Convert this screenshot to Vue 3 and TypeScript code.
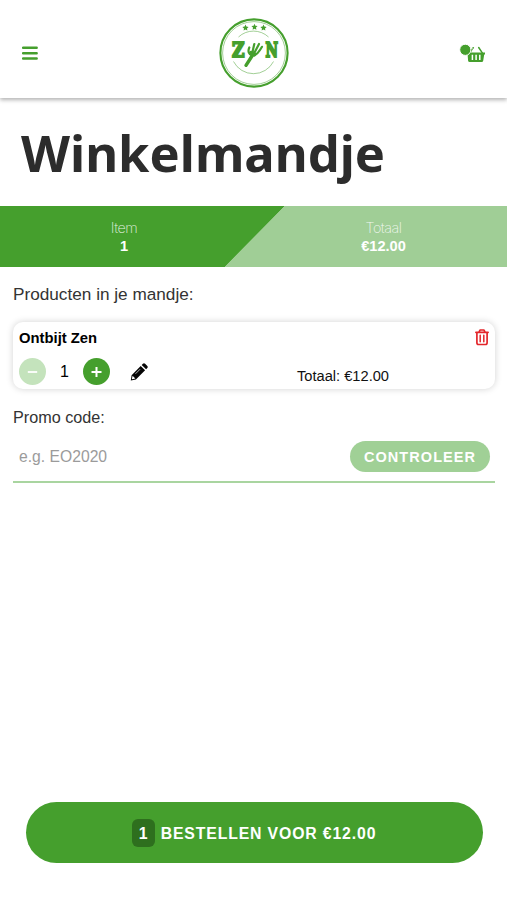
<script setup lang="ts">
import { computed, ref } from 'vue'

const quantity = ref(1)
const unitPrice = 12
const promo = ref('')
const total = computed(() => `€${(quantity.value * unitPrice).toFixed(2)}`)

function decrease() {
  if (quantity.value > 1) quantity.value--
}
function increase() {
  quantity.value++
}
</script>

<template>
  <div class="page">
    <header class="topbar">
      <button class="icon-btn menu" aria-label="Menu">
        <svg width="16" height="16" viewBox="0 0 16 16">
          <path d="M1 2.700h13.700M1 8.200h13.700M1 13.500h13.700" stroke="#459f2d" stroke-width="2.400" stroke-linecap="round" />
        </svg>
      </button>
      <svg class="logo" width="70" height="70" viewBox="0 0 70 70">
        <circle cx="35" cy="35" r="33.600" fill="none" stroke="#459f2d" stroke-width="2.100" />
        <circle cx="35" cy="35" r="31.400" fill="none" stroke="#459f2d" stroke-width=".5" />
        <path d="M19.500 19a22 22 0 0 1 30 0M14.500 43.500a22.500 22.500 0 0 0 40 0" fill="none" stroke="#459f2d" stroke-width=".5" />
        <g fill="#459f2d">
          <path id="star" d="M35.500 5.800l.9 2 2.200.3-1.600 1.500.4 2.200-1.900-1.100-1.900 1.100.4-2.200-1.600-1.500 2.200-.3z" />
          <use href="#star" x="-9" y=".8" />
          <use href="#star" x="9" y=".8" />
          <text class="mark" x="13" y="38.500" textLength="12.500" lengthAdjust="spacingAndGlyphs">Z</text>
          <text class="mark" x="46.500" y="38.500" textLength="12.500" lengthAdjust="spacingAndGlyphs">N</text>
        </g>
        <g fill="none" stroke="#459f2d" stroke-linecap="round" stroke-linejoin="round">
          <path d="M33 38L27 47.300" stroke-width="3.400" />
          <path d="M30.300 29.500C28.500 33.500 30 36.500 33 37.500C36.500 38.500 39.500 35 43 28.800" stroke-width="2.200" />
          <path d="M33 36L35.300 26M34.500 36.500L40 26" stroke-width="2.200" />
          <path d="M32.200 34.800l3 1.500" stroke-width="4" />
        </g>
      </svg>
      <button class="icon-btn basket" aria-label="Winkelmandje">
        <svg width="27" height="20" viewBox="0 0 27 20">
          <path d="M9 9.500h17v1.900h-.8l-1 6.300q-.2 1.400-1.500 1.400H10.600q-1.300 0-1.500-1.400L8.600 11.400z" fill="#459f2d" />
          <path d="M10.800 9.800l2.300-3.600M23.300 9.800l-3.600-5.300" stroke="#459f2d" stroke-width="1.500" stroke-linecap="round" />
          <path d="M13.400 11.700v5.200M17.100 11.700v5.200M20.800 11.700v5.200" stroke="#fff" stroke-width="1.500" />
          <circle cx="14.200" cy="4.800" r=".9" fill="#459f2d" />
          <circle cx="6.300" cy="6.800" r="5.600" fill="#459f2d" stroke="#fff" stroke-width="1" />
        </svg>
      </button>
    </header>

    <h1>Winkelmandje</h1>

    <section class="summary">
      <div class="stat">
        <span>Item</span>
        <strong>{{ quantity }}</strong>
      </div>
      <div class="stat">
        <span>Totaal</span>
        <strong>{{ total }}</strong>
      </div>
    </section>

    <main>
      <h2>Producten in je mandje:</h2>
      <article class="card">
        <div class="card-head">
          <strong>Ontbijt Zen</strong>
          <button class="icon-btn" aria-label="Verwijderen">
            <svg width="14" height="17" viewBox="0 0 14 17" fill="none" stroke="#e3262b" stroke-width="1.700" stroke-linejoin="round" stroke-linecap="round">
              <path d="M.9 3.300h12.200M4 3.100l1-2.100h4l1 2.100M1.900 3.500v10.300q0 1.700 1.700 1.700h6.800q1.700 0 1.700-1.700V3.500" />
              <path d="M5.200 6.300v6.500M8.800 6.300v6.500" stroke-width="1.500" />
            </svg>
          </button>
        </div>
        <div class="card-row">
          <div class="stepper">
            <button class="round minus" aria-label="Minder" @click="decrease">
              <svg width="11" height="11" viewBox="0 0 11 11"><path d="M.8 6h9.400" stroke="#fff" stroke-width="1.800" /></svg>
            </button>
            <span class="count">{{ quantity }}</span>
            <button class="round" aria-label="Meer" @click="increase">
              <svg width="11" height="11" viewBox="0 0 11 11"><path d="M.5 6h10M5.500 1v10" stroke="#fff" stroke-width="2" /></svg>
            </button>
          </div>
          <button class="icon-btn edit" aria-label="Bewerken">
            <svg width="18" height="18" viewBox="0 0 18 18">
              <path d="M10.700 2.900l4.400 4.400-9.200 9.200-5.100 1.100.8-5.300zM11.700 1.900l1.200-1.100q1.100-1 2.200 0l2.200 2.100q.9 1.100 0 2.200l-1.200 1.200z" fill="#050505" />
              <path d="M2.600 12.800l2.700 2.700-2.900.7-.5-.5z" fill="#fff" />
              <path d="M5.500 10.800l4.600-4.600" stroke="#fff" stroke-width=".7" />
            </svg>
          </button>
          <span class="line-total">Totaal: {{ total }}</span>
        </div>
      </article>

      <label class="promo-label" for="promo">Promo code:</label>
      <div class="promo">
        <input id="promo" v-model="promo" type="text" placeholder="e.g. EO2020" />
        <button class="check">CONTROLEER</button>
      </div>
    </main>

    <footer>
      <button class="order">
        <span class="badge">{{ quantity }}</span>
        <span class="order-text">BESTELLEN VOOR {{ total }}</span>
      </button>
    </footer>
  </div>
</template>

<style>
body {
  margin: 0;
  background: #fff;
}
</style>

<style scoped>
.page {
  box-sizing: border-box;
  display: flex;
  flex-direction: column;
  height: 900px;
  font-family: 'Liberation Sans', Arial, sans-serif;
  color: #333;
}
button {
  border: 0;
  padding: 0;
  font-family: inherit;
  cursor: pointer;
}
svg {
  display: block;
}
.icon-btn {
  background: none;
}
.topbar {
  box-sizing: border-box;
  display: grid;
  grid-template-columns: 1fr 70px 1fr;
  align-items: center;
  height: 98px;
  padding: 7px 21px 0 22px;
  box-shadow: 0 2px 4px rgba(0, 0, 0, 0.3);
}
.menu {
  justify-self: start;
}
.basket {
  justify-self: end;
}
.mark {
  font: bold 20px 'DejaVu Serif', serif;
  stroke: #459f2d;
  stroke-width: 2px;
}
h1 {
  margin: 0;
  height: 108px;
  padding-left: 21px;
  font: bold 50.700px/109px 'Noto Sans', sans-serif;
  color: #2c2c2c;
}
.summary {
  display: grid;
  grid-template-columns: 248px 247px;
  justify-content: space-between;
  align-items: center;
  height: 61px;
  background: linear-gradient(134.530deg, #459f2d 50%, #a0ce96 50.800%) 224px 0 / 60px 61px no-repeat,
    linear-gradient(90deg, #459f2d 225px, #a0ce96 225px);
}
.stat {
  display: flex;
  flex-direction: column;
  align-items: center;
  font-size: 14.600px;
  line-height: 18px;
  color: #fff;
  padding-top: 1px;
}
.stat span {
  font-family: Inter, sans-serif;
  font-weight: 200;
  font-size: 14.300px;
  letter-spacing: -0.5px;
  opacity: 0.85;
}
main {
  padding: 0 12px 0 13px;
}
h2 {
  margin: 0;
  height: 55px;
  font-weight: 400;
  font-size: 17.200px;
  line-height: 55px;
}
.card {
  box-sizing: border-box;
  height: 67px;
  padding: 7px 6px 0;
  border-radius: 10px;
  box-shadow: 0 0 7px rgba(0, 0, 0, 0.18);
  color: #000;
  font-size: 14.800px;
}
.card-head {
  display: flex;
  justify-content: space-between;
  align-items: center;
  height: 17px;
}
.card-row {
  display: flex;
  align-items: center;
  height: 27px;
  margin-top: 12px;
}
.stepper {
  display: flex;
  align-items: center;
  width: 91px;
}
.round {
  display: flex;
  align-items: center;
  justify-content: center;
  width: 27px;
  height: 27px;
  border-radius: 50%;
  background: #459f2d;
}
.minus {
  background: #c4e3bc;
}
.count {
  flex: 1;
  text-align: center;
  font-size: 16px;
}
.edit {
  margin-left: 20px;
}
.line-total {
  margin: 8px 0 0 149px;
  font-size: 14.650px;
  color: #111;
}
.promo-label {
  display: block;
  height: 51px;
  font-size: 16.200px;
  line-height: 57px;
}
.promo {
  box-sizing: border-box;
  display: flex;
  align-items: flex-start;
  height: 43px;
  padding: 1px 5px 0 6px;
  border-bottom: 2px solid #a9d5a0;
}
.promo input {
  flex: 1;
  min-width: 0;
  height: 32px;
  padding: 0;
  border: 0;
  outline: 0;
  background: none;
  font: 15.700px 'Liberation Sans', Arial, sans-serif;
}
.promo input::placeholder {
  color: #9b9b9b;
}
.check {
  width: 140px;
  height: 31px;
  border-radius: 16px;
  background: #a0d096;
  color: #fff;
  font-weight: 700;
  font-size: 14.500px;
  letter-spacing: 1.050px;
}
footer {
  margin-top: auto;
  padding: 0 24px 37px 26px;
}
.order {
  display: flex;
  align-items: center;
  justify-content: center;
  gap: 6px;
  width: 100%;
  height: 61px;
  border-radius: 31px;
  background: #459f2d;
  color: #fff;
  font-weight: 700;
  font-size: 15.800px;
  letter-spacing: 0.860px;
}
.order-text {
  padding-top: 2px;
  margin-right: 1px;
}
.badge {
  box-sizing: border-box;
  width: 23px;
  height: 28px;
  padding-top: 1px;
  border-radius: 6px;
  background: #2e6f1e;
  line-height: 28px;
  letter-spacing: 0;
}
</style>
